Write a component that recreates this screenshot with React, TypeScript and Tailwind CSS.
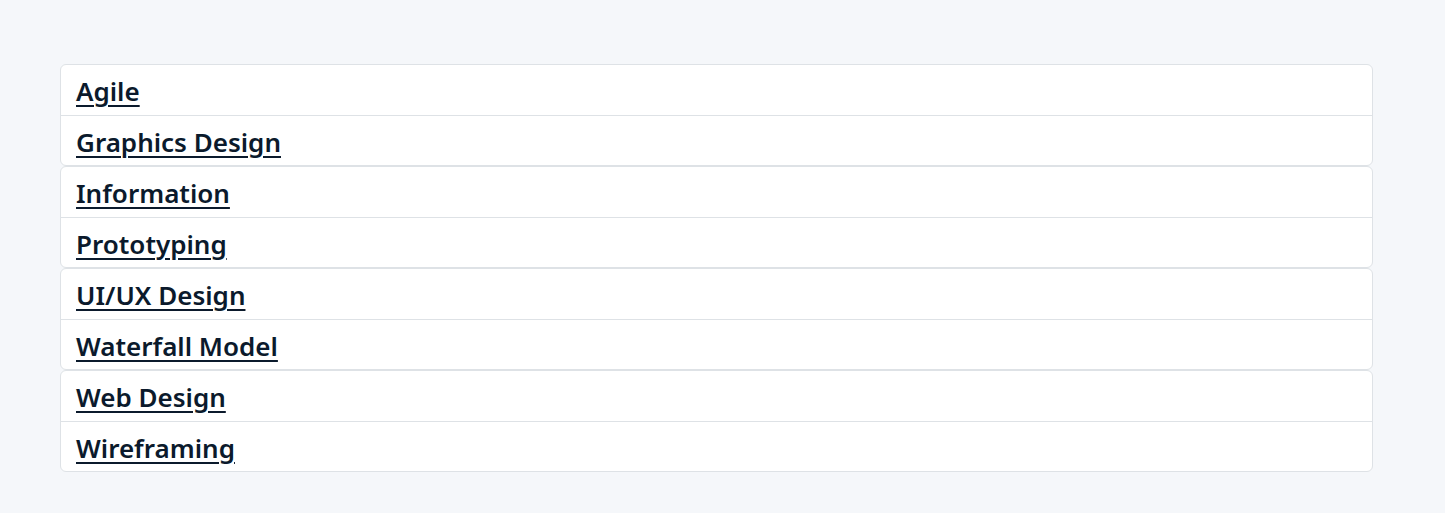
const groups: string[][] = [
  ['Agile', 'Graphics Design'],
  ['Information', 'Prototyping'],
  ['UI/UX Design', 'Waterfall Model'],
  ['Web Design', 'Wireframing'],
]

export default function App() {
  return (
    <div className="min-h-[513px] bg-[#f5f7fa] pl-[60px] pr-[72px] pt-[64px] font-['Noto_Sans',sans-serif]">
      {groups.map((items, gi) => (
        <ul key={gi} className="rounded-md border border-[#dee2e6] bg-white">
          {items.map((label, i) => (
            <li
              key={label}
              className={`flex h-[50px] items-center px-[15px] pt-[2px] ${i > 0 ? 'border-t border-[#dee2e6]' : ''}`}
            >
              <a
                href="#"
                className="text-[26px] font-semibold leading-none text-[#0b1a2c] underline decoration-2 underline-offset-[4px]"
              >
                {label}
              </a>
            </li>
          ))}
        </ul>
      ))}
    </div>
  )
}
